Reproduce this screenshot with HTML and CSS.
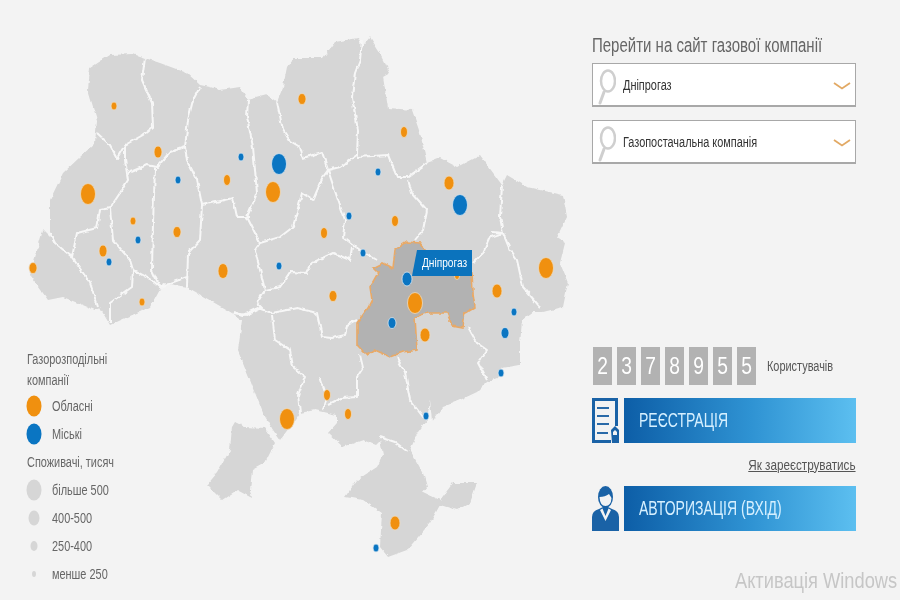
FILE: index.html
```html
<!DOCTYPE html>
<html lang="uk">
<head>
<meta charset="utf-8">
<title>Газові компанії</title>
<link rel="stylesheet" href="styles.css">
</head>
<body>
<main class="page">
  <section class="map-area">
    <svg class="map" width="592" height="600" viewBox="0 0 592 600" xmlns="http://www.w3.org/2000/svg">
      <defs>
        <filter id="rough" x="-5%" y="-5%" width="110%" height="110%">
          <feTurbulence type="fractalNoise" baseFrequency="0.16" numOctaves="2" seed="4"/>
          <feDisplacementMap in="SourceGraphic" scale="4" xChannelSelector="R" yChannelSelector="G"/>
          <feGaussianBlur stdDeviation="0.35"/>
        </filter>
      </defs>
      <g filter="url(#rough)">
        <path class="land" d="M90 68L110 55L133 54L145 58L160 63L187 73L200 85L210 87L220 90L240 87L248 100L267 95L277 102L283 87L287 67L293 58L323 58L335 42L358 38L362 47L370 37L380 53L390 73L383 77L388 108L412 110L420 133L427 163L440 158L457 167L480 155L502 185L507 175L527 187L563 195L567 217L557 238L565 243L560 263L568 283L563 307L543 312L533 312L522 320L520 343L520 365L502 368L497 378L487 382L477 392L460 400L443 407L432 422L430 400L427 420L418 432L410 450L423 473L427 487L423 492L440 500L453 483L477 483L470 503L457 510L440 505L430 523L407 550L388 557L380 547L382 513L363 500L345 497L357 480L377 467L383 455L380 440L375 445L363 440L343 447L328 433L337 423L337 415L315 410L300 413L295 420L280 440L273 430L263 413L250 380L238 350L242 320L232 313L187 287L163 283L150 307L110 325L100 308L95 310L63 297L48 300L30 275L43 230L50 237L50 200L63 173L95 143L97 120L88 90Z"/>
        <path class="land" d="M235 422L245 427L265 428L275 443L265 463L252 470L250 490L252 498L237 490L222 500L207 485L217 473L230 450L232 427Z"/>
        <path class="border" d="M145 58L142 80L152 103L153 127L143 135L125 145"/>
        <path class="border" d="M97 133L110 145L117 158L125 145L125 160L128 180L120 193L110 208L113 240L130 260L133 270L152 280L160 287L187 277"/>
        <path class="border" d="M128 173L147 165L157 167L170 152L185 147L188 120L193 100L200 87"/>
        <path class="border" d="M185 147L187 160L197 180L202 205L200 240L188 253L187 287"/>
        <path class="border" d="M155 168L153 223L152 270L160 287"/>
        <path class="border" d="M110 208L100 210L97 228L77 233L72 257L55 243L50 233M72 257L90 283L98 307"/>
        <path class="border" d="M133 270L132 287L110 303L110 323"/>
        <path class="border" d="M202 205L233 198L237 217L250 217M248 100L247 117L253 147L257 193L247 217L260 243L255 250L265 290L257 303L262 308L247 315L233 313"/>
        <path class="border" d="M277 102L283 130L290 141L300 147L303 158L322 152L328 170"/>
        <path class="border" d="M260 243L280 237L293 227L302 193L313 200L323 177L328 170L338 200L345 220L343 237L360 250L377 260"/>
        <path class="border" d="M362 40L360 60L355 73L352 97L358 130L357 155L340 167L328 170M357 157L388 155L397 177L408 177L427 163M408 180L412 193L427 210L423 230L415 240"/>
        <path class="border" d="M352 247L350 260L333 253L312 263L307 273L290 272L280 287L265 290"/>
        <path class="border" d="M502 185L500 217L503 233L510 250L517 260L523 287L540 307M492 232L503 233L490 237L483 253L473 263"/>
        <path class="border" d="M468 327L477 343L487 350L478 363L487 380M397 358L405 372L410 400L423 417L430 420"/>
        <path class="border" d="M233 312L243 315L258 308L272 313L297 308L317 313L322 337L332 338L345 335L347 325L357 320M272 315L275 340L290 350L293 367L305 377L298 395L300 413"/>
        <path class="border" d="M360 355L363 368L357 377L357 397L342 398L328 405M320 377L327 397L323 410"/>
        <path class="border" d="M380 437L395 442L408 452"/>
        <path class="region-active" d="M395 250L407 242L420 243L425 250L440 268L472 272L473 293L475 307L465 313L463 327L452 325L447 313L427 313L415 317L417 350L403 352L390 357L375 350L367 355L357 345L357 323L368 308L372 300L370 287L378 273L373 268L383 263L393 268Z"/>
      </g>
      <g class="orange">
        <ellipse cx="114" cy="106" rx="3" ry="4"/><ellipse cx="158" cy="152" rx="4" ry="6"/><ellipse cx="88" cy="194" rx="7.500" ry="10.500"/>
        <ellipse cx="133" cy="221" rx="3" ry="4"/><ellipse cx="103" cy="251" rx="4" ry="6"/><ellipse cx="33" cy="268" rx="4" ry="5.500"/>
        <ellipse cx="177" cy="232" rx="4" ry="5.500"/><ellipse cx="142" cy="302" rx="3" ry="4"/><ellipse cx="223" cy="271" rx="5" ry="7.500"/>
        <ellipse cx="227" cy="180" rx="3.500" ry="5.500"/><ellipse cx="273" cy="192" rx="7.500" ry="10.500"/><ellipse cx="302" cy="99" rx="4" ry="5.500"/>
        <ellipse cx="404" cy="132" rx="3.500" ry="5.500"/><ellipse cx="449" cy="183" rx="5" ry="7"/><ellipse cx="324" cy="233" rx="3.500" ry="5.500"/>
        <ellipse cx="395" cy="221" rx="3.500" ry="5.500"/><ellipse cx="333" cy="296" rx="4" ry="5.500"/><ellipse cx="415" cy="303" rx="7.500" ry="10.500"/>
        <ellipse cx="425" cy="335" rx="5" ry="7"/><ellipse cx="497" cy="291" rx="5" ry="7"/><ellipse cx="546" cy="268" rx="7.500" ry="10.500"/>
        <ellipse cx="287" cy="419" rx="7.500" ry="10.500"/><ellipse cx="327" cy="395" rx="3.500" ry="5.500"/><ellipse cx="348" cy="414" rx="3.500" ry="5.500"/>
        <ellipse cx="395" cy="523" rx="5" ry="7"/><ellipse cx="457" cy="276" rx="2.500" ry="3.500"/>
      </g>
      <g class="blue">
        <ellipse cx="241" cy="157" rx="3" ry="4"/><ellipse cx="178" cy="180" rx="3" ry="4"/><ellipse cx="138" cy="240" rx="3" ry="4"/>
        <ellipse cx="109" cy="262" rx="3" ry="4"/><ellipse cx="279" cy="164" rx="7.500" ry="10.500"/><ellipse cx="279" cy="266" rx="3" ry="4"/>
        <ellipse cx="349" cy="216" rx="3" ry="4"/><ellipse cx="378" cy="172" rx="3" ry="4"/><ellipse cx="460" cy="205" rx="7.500" ry="10.500"/>
        <ellipse cx="363" cy="253" rx="3" ry="4"/><ellipse cx="407" cy="279" rx="5" ry="7"/><ellipse cx="392" cy="323" rx="4" ry="5.500"/>
        <ellipse cx="514" cy="312" rx="3" ry="4"/><ellipse cx="505" cy="333" rx="4" ry="5.500"/><ellipse cx="501" cy="373" rx="3" ry="4"/>
        <ellipse cx="426" cy="416" rx="3" ry="4"/><ellipse cx="376" cy="548" rx="3" ry="4"/>
      </g>
    </svg>
    <div class="tip"><span class="narrow">Дніпрогаз</span></div>
    <div class="legend">
      <p class="legend-title"><span class="narrow">Газорозподільні</span></p>
      <p class="legend-title"><span class="narrow">компанії</span></p>
      <div class="legend-row"><i class="mark mark-orange"></i><span class="narrow">Обласні</span></div>
      <div class="legend-row"><i class="mark mark-blue"></i><span class="narrow">Міські</span></div>
      <p class="legend-title"><span class="narrow">Споживачі, тисяч</span></p>
      <div class="legend-row"><i class="mark mark-xl"></i><span class="narrow">більше 500</span></div>
      <div class="legend-row"><i class="mark mark-l"></i><span class="narrow">400-500</span></div>
      <div class="legend-row"><i class="mark mark-m"></i><span class="narrow">250-400</span></div>
      <div class="legend-row"><i class="mark mark-s"></i><span class="narrow">менше 250</span></div>
    </div>
  </section>

  <aside class="side">
    <h2 class="side-title"><span class="narrow">Перейти на сайт газової компанії</span></h2>
    <div class="select">
      <svg class="search" width="20" height="38" viewBox="0 0 20 38"><ellipse cx="12" cy="14" rx="7" ry="10.500" fill="none" stroke="#cfcfcf" stroke-width="2.500"/><path d="M8 25L4 36" stroke="#cfcfcf" stroke-width="3" stroke-linecap="round"/></svg>
      <span class="select-text narrow">Дніпрогаз</span>
      <svg class="chev" width="18" height="8" viewBox="0 0 18 8"><path d="M1 1L9 6.500L17 1" fill="none" stroke="#e2a964" stroke-width="1.800"/></svg>
    </div>
    <div class="select">
      <svg class="search" width="20" height="38" viewBox="0 0 20 38"><ellipse cx="12" cy="14" rx="7" ry="10.500" fill="none" stroke="#cfcfcf" stroke-width="2.500"/><path d="M8 25L4 36" stroke="#cfcfcf" stroke-width="3" stroke-linecap="round"/></svg>
      <span class="select-text narrow">Газопостачальна компанія</span>
      <svg class="chev" width="18" height="8" viewBox="0 0 18 8"><path d="M1 1L9 6.500L17 1" fill="none" stroke="#e2a964" stroke-width="1.800"/></svg>
    </div>
    <div class="counter">
      <div class="digits"><b><span>2</span></b><b><span>3</span></b><b><span>7</span></b><b><span>8</span></b><b><span>9</span></b><b><span>5</span></b><b><span>5</span></b></div>
      <span class="counter-label narrow">Користувачів</span>
    </div>
    <div class="action">
      <svg class="action-icon" width="27" height="45" viewBox="0 0 27 45">
        <path d="M0 0H26V28H23V3H3V42H19V45H0Z" fill="#1a62a6"/>
        <path d="M5 10H17M5 18H17M5 26H17M5 35H16" stroke="#2a6aa8" stroke-width="2"/>
        <path d="M19 32L23 28L27 32V45H20Z" fill="#1a62a6"/>
        <path d="M21 34L23 32L25 34V37H21Z" fill="#f3f3f3"/>
      </svg>
      <a class="action-bar"><span class="narrow">РЕЄСТРАЦІЯ</span></a>
    </div>
    <div class="how"><a class="how-link narrow">Як зареєструватись</a></div>
    <div class="action">
      <svg class="action-icon" width="27" height="45" viewBox="0 0 27 45">
        <path d="M0 45V31Q0 25 7 23L11 21H16L20 23Q27 25 27 31V45Z" fill="#1a62a6"/>
        <path d="M8 24L13.500 35L19 24L16.500 22.500L13.500 30L10.500 22.500Z" fill="#f3f3f3"/>
        <ellipse cx="13.500" cy="11" rx="7.500" ry="11" fill="#1a62a6"/>
        <path d="M7.500 11Q13 11 17 8Q19 11 19.500 12Q19 20 13.500 20Q8 20 7.500 11Z" fill="#f3f3f3"/>
      </svg>
      <a class="action-bar"><span class="narrow">АВТОРИЗАЦІЯ (ВХІД)</span></a>
    </div>
  </aside>
  <div class="watermark"><span class="narrow">Активація Windows</span></div>
</main>
</body>
</html>
```

FILE: styles.css
```css
* { box-sizing: border-box; }
html, body { margin: 0; padding: 0; }
body {
  background: #f3f3f3;
  font-family: "Liberation Sans", Arial, sans-serif;
  color: #555;
}
.page {
  position: relative;
  display: flex;
  width: 900px;
  height: 600px;
  overflow: hidden;
}
.narrow {
  display: inline-block;
  transform: scaleX(.78);
  transform-origin: left center;
  white-space: nowrap;
}

/* map */
.map-area { position: relative; flex: 0 0 592px; height: 600px; }
.map { display: block; }
.land { fill: #d6d6d6; }
.border { fill: none; stroke: #f7f7f7; stroke-width: 2; stroke-linejoin: round; }
.region-active { fill: #b2b2b2; stroke: #e9a966; stroke-width: 1.6; }
.orange ellipse { fill: #f0900f; stroke: #eedcc0; stroke-width: .8; }
.blue ellipse { fill: #0a75c2; stroke: #d8e6f0; stroke-width: .8; }

.tip {
  position: absolute;
  left: 412px;
  top: 250px;
  width: 60px;
  height: 26px;
  padding-left: 10px;
  background: #0b73bd;
  clip-path: polygon(5px 0, 100% 0, 100% 100%, 0 100%);
  color: #fff;
  font-size: 13px;
  line-height: 25px;
}

/* legend */
.legend {
  position: absolute;
  left: 27px;
  top: 345px;
  font-size: 14px;
  color: #666;
}
.legend-title { margin: 0; height: 28px; line-height: 28px; }
.legend-title + .legend-title { height: 19px; line-height: 14px; }
.legend-row { display: flex; align-items: center; height: 28px; }
.mark { flex: none; display: block; margin-left: 7px; margin-right: 18px; width: 0; height: 0; position: relative; }
.mark::before { content: ""; position: absolute; border-radius: 50%; transform: translate(-50%, -50%); }
.mark-orange::before { width: 15px; height: 21px; background: #f0900f; }
.mark-blue::before { width: 15px; height: 21px; background: #0a75c2; }
.mark-xl::before { width: 15px; height: 21px; background: #d6d6d6; }
.mark-l::before { width: 11px; height: 15px; background: #d6d6d6; }
.mark-m::before { width: 7px; height: 10px; background: #d6d6d6; }
.mark-s::before { width: 4px; height: 6px; background: #d6d6d6; }

/* side */
.side {
  flex: 0 0 264px;
  width: 264px;
  min-width: 0;
  display: flex;
  flex-direction: column;
  padding-top: 35px;
}
.side-title {
  margin: 0 0 7px;
  height: 21px;
  font-size: 20px;
  line-height: 21px;
  font-weight: 400;
  color: #666;
}
.side-title .narrow { transform: scaleX(.75); }
.select {
  display: flex;
  align-items: center;
  height: 44px;
  margin-bottom: 13px;
  padding: 0 0 0 3px;
  background: #fff;
  border: 1px solid #a8a8a8;
  border-bottom-width: 2px;
}
.search { flex: none; margin-right: 7px; margin-top: 2px; }
.select-text { flex: 1; min-width: 0; font-size: 14px; color: #333; }
.chev { flex: none; margin: 3px 4px 0 0; }
.counter {
  display: flex;
  align-items: center;
  margin-top: 170px;
  margin-left: 1px;
}
.digits { display: flex; gap: 5px; margin-right: 11px; }
.digits b {
  display: block;
  width: 19px;
  height: 38px;
  background: #b2b2b2;
  color: #fff;
  font-size: 24px;
  font-weight: 400;
  line-height: 38px;
  text-align: center;
}
.digits span { display: block; transform: scaleX(.8); }
.counter-label { font-size: 14px; color: #555; }
.action { display: flex; margin-top: 13px; gap: 5px; }
.action-icon { flex: none; }
.action-bar {
  display: flex;
  align-items: center;
  flex: 1;
  height: 45px;
  padding-left: 15px;
  background: linear-gradient(90deg, #0d5ea7 0%, #2f93d3 55%, #5cbff0 100%);
  color: #d6f0ff;
  font-size: 20px;
}
.action-bar .narrow { transform: scaleX(.7); }
.how { display: flex; justify-content: flex-end; height: 43px; margin-bottom: -13px; padding-top: 13px; }
.how-link {
  font-size: 15px;
  line-height: 18px;
  color: #555;
  text-decoration: underline;
  transform-origin: right center;
}
.watermark {
  position: absolute;
  left: 735px;
  bottom: 6px;
  font-size: 22px;
  color: #c6c6c6;
}
.watermark .narrow { transform: scaleX(.83); }
```
